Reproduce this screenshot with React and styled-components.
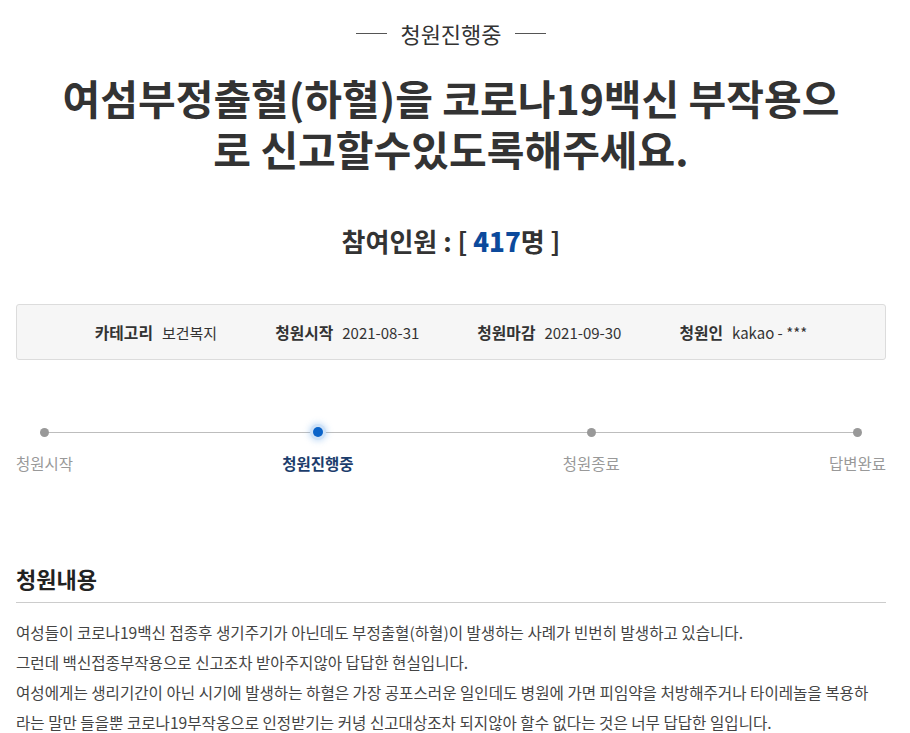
import React from 'react';
import styled, { createGlobalStyle } from 'styled-components';

const GlobalStyle = createGlobalStyle`
  body {
    margin: 0;
    background: #fff;
    font-family: "Noto Sans CJK KR", "Noto Sans", sans-serif;
    color: #333;
  }
`;

const Page = styled.div`
  width: 870px;
  padding: 20px 24px 0 16px;
`;

const Status = styled.div`
  display: flex;
  align-items: center;
  justify-content: center;
  gap: 13px;
  height: 26px;
  font-size: 22px;
  color: #333;

  &::before,
  &::after {
    content: '';
    width: 31px;
    height: 1px;
    background: #555;
  }
`;

const Title = styled.h1`
  width: 790px;
  margin: 26px auto 0;
  font-size: 41px;
  line-height: 51px;
  font-weight: 700;
  text-align: center;
  word-break: break-all;
  color: #333;
`;

const Count = styled.div`
  margin-top: 50px;
  font-size: 26px;
  line-height: 34px;
  font-weight: 700;
  text-align: center;
  color: #333;

  strong {
    color: #0c4a9c;
  }
`;

const InfoBox = styled.ul`
  display: flex;
  justify-content: center;
  align-items: center;
  gap: 58px;
  box-sizing: border-box;
  height: 56px;
  margin: 46px 0 0;
  padding: 0;
  list-style: none;
  background: #f6f6f6;
  border: 1px solid #dcdcdc;
  border-radius: 3px;
`;

const InfoItem = styled.li`
  display: flex;
  align-items: baseline;
  gap: 9px;
  font-size: 15px;
  color: #333;

  b {
    font-size: 15.8px;
    font-weight: 700;
  }
`;

const Steps = styled.ol`
  position: relative;
  display: flex;
  justify-content: space-between;
  margin: 62px 0 0;
  padding: 0;
  list-style: none;

  &::before {
    content: '';
    position: absolute;
    top: 10px;
    left: 28px;
    right: 28px;
    height: 1px;
    background: #bdbdbd;
  }
`;

const Step = styled.li`
  position: relative;
  display: flex;
  flex-direction: column;
  align-items: center;
  gap: 11px;
  font-size: 15.5px;
  line-height: 20px;
  color: ${p => (p.$active ? '#1c3d6c' : '#999')};
  font-weight: ${p => (p.$active ? 700 : 400)};
`;

const Dot = styled.span`
  display: flex;
  align-items: center;
  justify-content: center;
  height: 20px;

  &::after {
    content: '';
    width: ${p => (p.$active ? '10px' : '9px')};
    height: ${p => (p.$active ? '10px' : '9px')};
    border-radius: 50%;
    background: ${p => (p.$active ? '#0a63c9' : '#999')};
    box-shadow: ${p =>
      p.$active ? '0 0 0 3px #cfe2f7, 0 0 6px 4px rgba(120, 175, 235, 0.45)' : 'none'};
  }
`;

const SectionTitle = styled.h2`
  margin: 90px 0 0;
  padding-bottom: 9px;
  font-size: 22px;
  line-height: 30px;
  font-weight: 700;
  color: #222;
  border-bottom: 1px solid #ccc;
`;

const Body = styled.div`
  width: 860px;
  padding-top: 14px;
  font-size: 15.6px;
  line-height: 30px;
  color: #444;

  p {
    margin: 0;
  }
`;

const steps = ['청원시작', '청원진행중', '청원종료', '답변완료'];

const App = () => (
  <>
    <GlobalStyle />
    <Page>
      <Status>청원진행중</Status>
      <Title>여섬부정출혈(하혈)을 코로나19백신 부작용으로 신고할수있도록해주세요.</Title>
      <Count>
        참여인원 : [ <strong>417</strong>명 ]
      </Count>
      <InfoBox>
        <InfoItem><b>카테고리</b>보건복지</InfoItem>
        <InfoItem><b>청원시작</b>2021-08-31</InfoItem>
        <InfoItem><b>청원마감</b>2021-09-30</InfoItem>
        <InfoItem><b>청원인</b>kakao - ***</InfoItem>
      </InfoBox>
      <Steps>
        {steps.map((s, i) => (
          <Step key={s} $active={i === 1}>
            <Dot $active={i === 1} />
            {s}
          </Step>
        ))}
      </Steps>
      <SectionTitle>청원내용</SectionTitle>
      <Body>
        <p>여성들이 코로나19백신 접종후 생기주기가 아닌데도 부정출혈(하혈)이 발생하는 사례가 빈번히 발생하고 있습니다.</p>
        <p>그런데 백신접종부작용으로 신고조차 받아주지않아 답답한 현실입니다.</p>
        <p>여성에게는 생리기간이 아닌 시기에 발생하는 하혈은 가장 공포스러운 일인데도 병원에 가면 피임약을 처방해주거나 타이레놀을 복용하라는 말만 들을뿐 코로나19부작옹으로 인정받기는 커녕 신고대상조차 되지않아 할수 없다는 것은 너무 답답한 일입니다.</p>
      </Body>
    </Page>
  </>
);

export default App;
